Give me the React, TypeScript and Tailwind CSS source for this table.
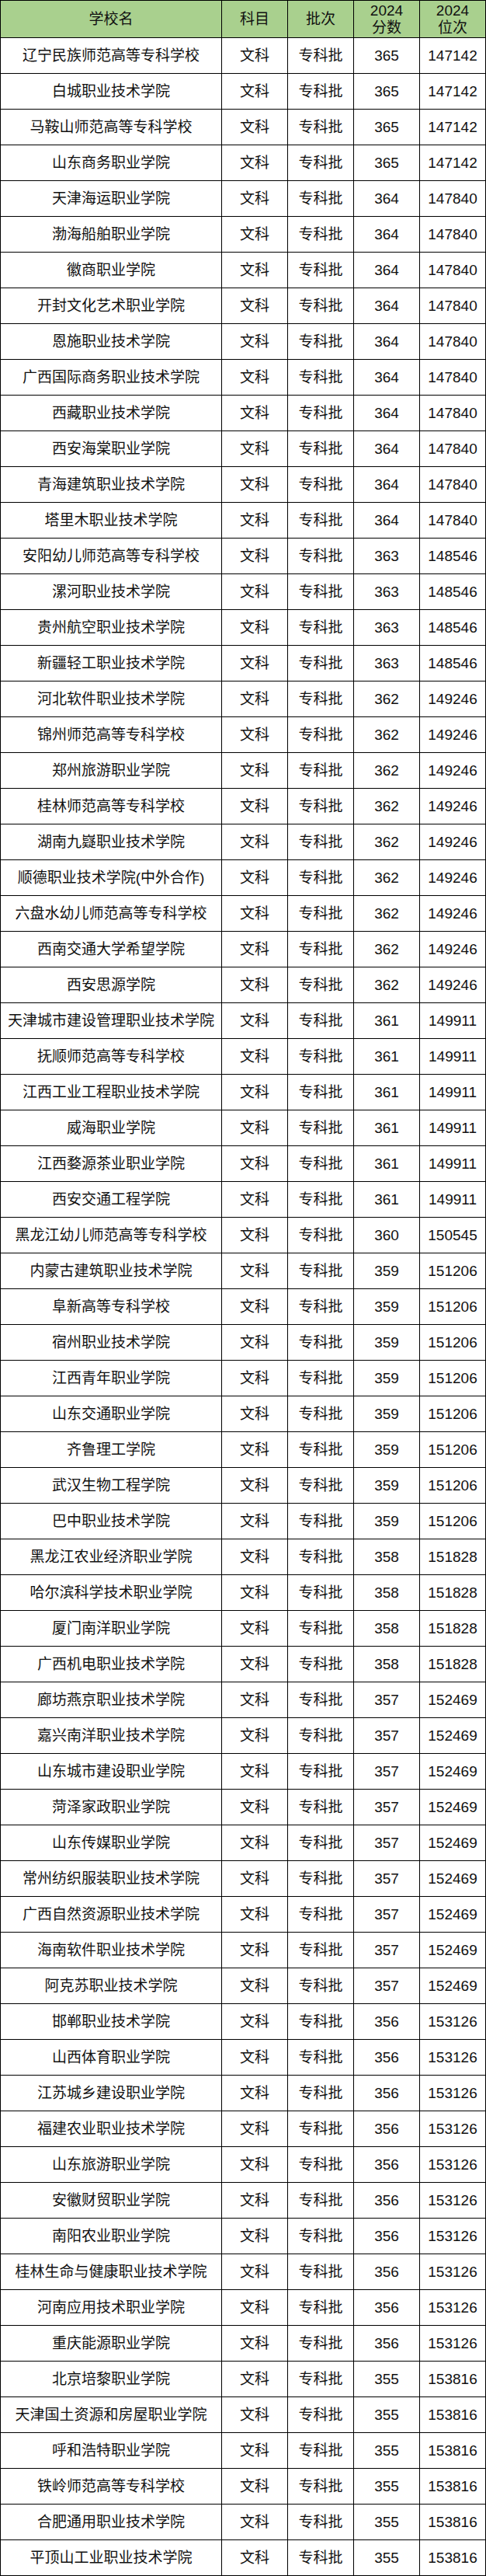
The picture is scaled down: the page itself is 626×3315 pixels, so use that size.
const rows: [string, string, string][] = [
  ["辽宁民族师范高等专科学校", "365", "147142"],
  ["白城职业技术学院", "365", "147142"],
  ["马鞍山师范高等专科学校", "365", "147142"],
  ["山东商务职业学院", "365", "147142"],
  ["天津海运职业学院", "364", "147840"],
  ["渤海船舶职业学院", "364", "147840"],
  ["徽商职业学院", "364", "147840"],
  ["开封文化艺术职业学院", "364", "147840"],
  ["恩施职业技术学院", "364", "147840"],
  ["广西国际商务职业技术学院", "364", "147840"],
  ["西藏职业技术学院", "364", "147840"],
  ["西安海棠职业学院", "364", "147840"],
  ["青海建筑职业技术学院", "364", "147840"],
  ["塔里木职业技术学院", "364", "147840"],
  ["安阳幼儿师范高等专科学校", "363", "148546"],
  ["漯河职业技术学院", "363", "148546"],
  ["贵州航空职业技术学院", "363", "148546"],
  ["新疆轻工职业技术学院", "363", "148546"],
  ["河北软件职业技术学院", "362", "149246"],
  ["锦州师范高等专科学校", "362", "149246"],
  ["郑州旅游职业学院", "362", "149246"],
  ["桂林师范高等专科学校", "362", "149246"],
  ["湖南九嶷职业技术学院", "362", "149246"],
  ["顺德职业技术学院(中外合作)", "362", "149246"],
  ["六盘水幼儿师范高等专科学校", "362", "149246"],
  ["西南交通大学希望学院", "362", "149246"],
  ["西安思源学院", "362", "149246"],
  ["天津城市建设管理职业技术学院", "361", "149911"],
  ["抚顺师范高等专科学校", "361", "149911"],
  ["江西工业工程职业技术学院", "361", "149911"],
  ["威海职业学院", "361", "149911"],
  ["江西婺源茶业职业学院", "361", "149911"],
  ["西安交通工程学院", "361", "149911"],
  ["黑龙江幼儿师范高等专科学校", "360", "150545"],
  ["内蒙古建筑职业技术学院", "359", "151206"],
  ["阜新高等专科学校", "359", "151206"],
  ["宿州职业技术学院", "359", "151206"],
  ["江西青年职业学院", "359", "151206"],
  ["山东交通职业学院", "359", "151206"],
  ["齐鲁理工学院", "359", "151206"],
  ["武汉生物工程学院", "359", "151206"],
  ["巴中职业技术学院", "359", "151206"],
  ["黑龙江农业经济职业学院", "358", "151828"],
  ["哈尔滨科学技术职业学院", "358", "151828"],
  ["厦门南洋职业学院", "358", "151828"],
  ["广西机电职业技术学院", "358", "151828"],
  ["廊坊燕京职业技术学院", "357", "152469"],
  ["嘉兴南洋职业技术学院", "357", "152469"],
  ["山东城市建设职业学院", "357", "152469"],
  ["菏泽家政职业学院", "357", "152469"],
  ["山东传媒职业学院", "357", "152469"],
  ["常州纺织服装职业技术学院", "357", "152469"],
  ["广西自然资源职业技术学院", "357", "152469"],
  ["海南软件职业技术学院", "357", "152469"],
  ["阿克苏职业技术学院", "357", "152469"],
  ["邯郸职业技术学院", "356", "153126"],
  ["山西体育职业学院", "356", "153126"],
  ["江苏城乡建设职业学院", "356", "153126"],
  ["福建农业职业技术学院", "356", "153126"],
  ["山东旅游职业学院", "356", "153126"],
  ["安徽财贸职业学院", "356", "153126"],
  ["南阳农业职业学院", "356", "153126"],
  ["桂林生命与健康职业技术学院", "356", "153126"],
  ["河南应用技术职业学院", "356", "153126"],
  ["重庆能源职业学院", "356", "153126"],
  ["北京培黎职业学院", "355", "153816"],
  ["天津国土资源和房屋职业学院", "355", "153816"],
  ["呼和浩特职业学院", "355", "153816"],
  ["铁岭师范高等专科学校", "355", "153816"],
  ["合肥通用职业技术学院", "355", "153816"],
  ["平顶山工业职业技术学院", "355", "153816"],
]

const cell = "flex items-center justify-center border-r border-b border-black text-center"

export default function App() {
  return (
    <div
      className="w-[626px] bg-white text-[19px] text-[#111] leading-none"
      style={{ fontFamily: '"Liberation Sans", "Noto Sans CJK SC", sans-serif' }}
    >
      <div className="grid grid-cols-[285px_85px_85px_85px_85px] border-t border-l border-black">
        <div className={`${cell} h-[48px] bg-[#a9d08e]`}>学校名</div>
        <div className={`${cell} h-[48px] bg-[#a9d08e]`}>科目</div>
        <div className={`${cell} h-[48px] bg-[#a9d08e]`}>批次</div>
        <div className={`${cell} h-[48px] bg-[#a9d08e] flex-col leading-[22px]`}>
          <span>2024</span>
          <span>分数</span>
        </div>
        <div className={`${cell} h-[48px] bg-[#a9d08e] flex-col leading-[22px]`}>
          <span>2024</span>
          <span>位次</span>
        </div>

        {rows.map(([name, score, rank], i) => (
          <div key={i} className="contents">
            <div className={`${cell} h-[46px] whitespace-nowrap`}>{name}</div>
            <div className={`${cell} h-[46px]`}>文科</div>
            <div className={`${cell} h-[46px]`}>专科批</div>
            <div className={`${cell} h-[46px]`}>{score}</div>
            <div className={`${cell} h-[46px]`}>{rank}</div>
          </div>
        ))}
      </div>
    </div>
  )
}
